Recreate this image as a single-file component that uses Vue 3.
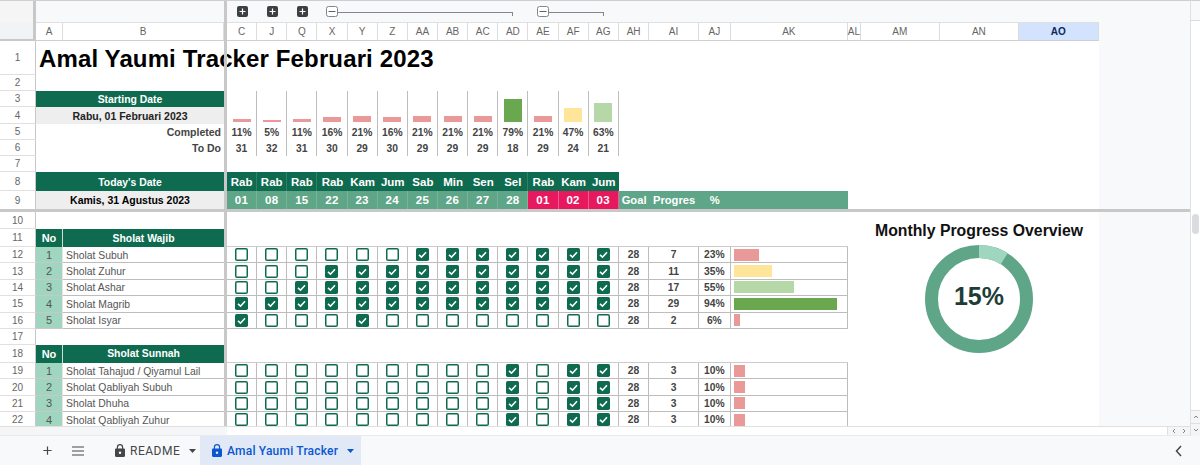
<script setup>
const cols = ['C','J','Q','X','Y','Z','AA','AB','AC','AD','AE','AF','AG']
const restCols = [['AH',''],['AI',''],['AJ',''],['AK',''],['AL','narrow'],['AM',''],['AN',''],['AO','sel']]
const pct = [11,5,11,16,21,16,21,21,21,79,21,47,63]
const todo = [31,32,31,30,29,30,29,29,29,18,29,24,21]
const days = ['Rab','Rab','Rab','Rab','Kam','Jum','Sab','Min','Sen','Sel','Rab','Kam','Jum']
const dates = ['01','08','15','22','23','24','25','26','27','28','01','02','03']
const colorFor = p => (p < 30 ? '#ea9999' : p < 50 ? '#ffe599' : p < 75 ? '#b6d7a8' : '#6aa84f')
const sunnahChecks = [0,0,0,0,0,0,0,0,0,1,0,1,1]
const wajib = [
  { row: 12, no: 1, name: 'Sholat Subuh', checks: [0,0,0,0,0,0,1,1,1,1,1,1,1], prog: 7, pct: 23 },
  { row: 13, no: 2, name: 'Sholat Zuhur', checks: [0,0,0,1,1,1,1,1,1,1,1,1,1], prog: 11, pct: 35 },
  { row: 14, no: 3, name: 'Sholat Ashar', checks: [0,0,1,1,1,1,1,1,1,1,1,1,1], prog: 17, pct: 55 },
  { row: 15, no: 4, name: 'Sholat Magrib', checks: [1,1,1,1,1,1,1,1,1,1,1,1,1], prog: 29, pct: 94 },
  { row: 16, no: 5, name: 'Sholat Isyar', checks: [1,0,0,0,1,0,0,0,0,0,0,0,0], prog: 2, pct: 6 }
]
const sunnah = [
  { row: 19, no: 1, name: 'Sholat Tahajud / Qiyamul Lail', checks: sunnahChecks, prog: 3, pct: 10 },
  { row: 20, no: 2, name: 'Sholat Qabliyah Subuh', checks: sunnahChecks, prog: 3, pct: 10 },
  { row: 21, no: 3, name: 'Sholat Dhuha', checks: sunnahChecks, prog: 3, pct: 10 },
  { row: 22, no: 4, name: 'Sholat Qabliyah Zuhur', checks: sunnahChecks, prog: 3, pct: 10 }
]
const sections = [
  { headRow: 11, blankRow: 10, title: 'Sholat Wajib', rows: wajib },
  { headRow: 18, blankRow: 17, title: 'Sholat Sunnah', rows: sunnah }
]
const circumference = 2 * Math.PI * 47.5
const donutDash = `${circumference * 32 / 360} ${circumference}`
</script>

<template>
  <div class="app">
    <div class="upper">
      <div class="content">
        <div class="viewport">
          <div class="grid top-grid">
            <!-- group row -->
            <div class="corner-a"></div>
            <div class="ab groupbg"></div>
            <div class="fz"></div>
            <div v-for="n in 3" :key="'p' + n" class="groupbg gcell">
              <svg class="plus" viewBox="0 0 11 11"><rect width="11" height="11" rx="2" fill="#3c4043"/><path d="M5.5 2.5v6M2.5 5.5h6" stroke="#fff" stroke-width="1.2"/></svg>
            </div>
            <div class="groupbg bracket span7">
              <svg class="minus" viewBox="0 0 12 11"><rect x=".5" y=".5" width="11" height="10" rx="2" fill="#fff" stroke="#80868b"/><path d="M2.5 5.5h7" stroke="#5f6368"/></svg>
              <span class="bline"></span>
            </div>
            <div class="groupbg bracket span3">
              <svg class="minus" viewBox="0 0 12 11"><rect x=".5" y=".5" width="11" height="10" rx="2" fill="#fff" stroke="#80868b"/><path d="M2.5 5.5h7" stroke="#5f6368"/></svg>
              <span class="bline"></span>
            </div>
            <div class="groupbg span8"></div>

            <!-- column letters -->
            <div class="corner-b"></div>
            <div class="colh">A</div>
            <div class="colh">B</div>
            <div class="fz"></div>
            <div v-for="c in cols" :key="c" class="colh">{{ c }}</div>
            <div v-for="c in restCols" :key="c[0]" class="colh" :class="c[1]">{{ c[0] }}</div>

            <!-- row 1 -->
            <div class="rown">1</div>
            <div class="ab title">Amal Yaumi Tracker Februari 2023</div>
            <div class="fz"></div>
            <div class="span21"></div>

            <!-- row 2 -->
            <div class="rown">2</div>
            <div class="ab"></div>
            <div class="fz"></div>
            <div class="span21"></div>

            <!-- rows 3 and 4 -->
            <div class="rown">3</div>
            <div class="ab green hcell">Starting Date</div>
            <div class="fz rows2"></div>
            <div v-for="(p, i) in pct" :key="'b' + i" class="barcell rows2">
              <span class="vbar-mini" :style="{ height: p * 0.29 + 0.3 + 'px', background: colorFor(p) }"></span>
            </div>
            <div class="span8 rows2"></div>
            <div class="rown">4</div>
            <div class="ab greycell">Rabu, 01 Februari 2023</div>

            <!-- row 5 -->
            <div class="rown">5</div>
            <div class="ab label">Completed</div>
            <div class="fz"></div>
            <div v-for="(p, i) in pct" :key="'c' + i" class="stat">{{ p }}%</div>
            <div class="span8"></div>

            <!-- row 6 -->
            <div class="rown">6</div>
            <div class="ab label">To Do</div>
            <div class="fz"></div>
            <div v-for="(t, i) in todo" :key="'t' + i" class="stat">{{ t }}</div>
            <div class="span8"></div>

            <!-- row 7 -->
            <div class="rown">7</div>
            <div class="ab"></div>
            <div class="fz"></div>
            <div class="span21"></div>

            <!-- row 8 -->
            <div class="rown">8</div>
            <div class="ab green hcell">Today's Date</div>
            <div class="fz"></div>
            <div v-for="(d, i) in days" :key="'d' + i" class="day" :class="{ sep: i < 3 || i === 9 }">{{ d }}</div>
            <div class="span8"></div>

            <!-- row 9 -->
            <div class="rown last">9</div>
            <div class="ab greycell strong">Kamis, 31 Agustus 2023</div>
            <div class="fz"></div>
            <div v-for="(d, i) in dates" :key="'n' + i" class="date" :class="{ pink: i > 9 }">{{ d }}</div>
            <div class="mid meta">Goal</div>
            <div class="mid meta">Progres</div>
            <div class="mid meta">%</div>
            <div class="mid"></div>
            <div class="span4"></div>
          </div>

          <div class="hfreeze"></div>

          <div class="bottom">
            <div class="grid bottom-grid">
              <template v-for="s in sections" :key="s.title">
                <div class="rown">{{ s.blankRow }}</div>
                <div class="ab"></div>
                <div class="fz"></div>
                <div class="span21"></div>

                <div class="rown">{{ s.headRow }}</div>
                <div class="green no-head">No</div>
                <div class="green sect">{{ s.title }}</div>
                <div class="fz"></div>
                <div class="span17 headfill"></div>
                <div class="span4"></div>

                <template v-for="r in s.rows" :key="r.row">
                  <div class="rown">{{ r.row }}</div>
                  <div class="no">{{ r.no }}</div>
                  <div class="name">{{ r.name }}</div>
                  <div class="fz"></div>
                  <div v-for="(c, i) in r.checks" :key="i" class="chk">
                    <svg v-if="c" class="box" viewBox="0 0 13 13"><rect width="13" height="13" rx="1.8" fill="#0f6b4f"/><path d="M3 6.8l2.5 2.4L10 4.2" fill="none" stroke="#fff" stroke-width="1.6"/></svg>
                    <svg v-else class="box" viewBox="0 0 13 13"><rect x=".75" y=".75" width="11.5" height="11.5" rx="1.3" fill="#fff" stroke="#0f6b4f" stroke-width="1.5"/></svg>
                  </div>
                  <div class="val">28</div>
                  <div class="val">{{ r.prog }}</div>
                  <div class="val">{{ r.pct }}%</div>
                  <div class="barwrap"><span class="hbar-mini" :style="{ width: r.pct * 1.1 + 'px', background: colorFor(r.pct) }"></span></div>
                  <div class="span4"></div>
                </template>
              </template>
            </div>

            <div class="chart">
              <div class="chart-title">Monthly Progress Overview</div>
              <svg class="donut" viewBox="0 0 108 108">
                <circle cx="54" cy="54" r="47.5" fill="none" stroke="#5fa688" stroke-width="13"/>
                <circle cx="54" cy="54" r="47.5" fill="none" stroke="#9ed6bf" stroke-width="13" :stroke-dasharray="donutDash" transform="rotate(-90 54 54)"/>
                <text x="54" y="60" text-anchor="middle" class="donut-text">15%</text>
              </svg>
            </div>
          </div>
        </div>

        <div class="hscroll">
          <div class="hs-left"></div>
          <div class="hs-thumb"></div>
          <div class="hs-track"></div>
          <div class="hs-btns">
            <svg viewBox="0 0 6 6"><path d="M4 1L2 3l2 2" fill="none" stroke="#80868b"/></svg>
            <svg viewBox="0 0 6 6"><path d="M2 1l2 2-2 2" fill="none" stroke="#80868b"/></svg>
          </div>
        </div>
      </div>

      <div class="vscroll">
        <div class="vs-top"></div>
        <div class="vs-thumb"></div>
        <div class="vs-track"></div>
        <div class="vs-btn"><svg viewBox="0 0 6 6"><path d="M1 4l2-2 2 2" fill="none" stroke="#80868b"/></svg></div>
        <div class="vs-btn"><svg viewBox="0 0 6 6"><path d="M1 2l2 2 2-2" fill="none" stroke="#80868b"/></svg></div>
      </div>
    </div>

    <div class="tabs">
      <svg class="ic add" viewBox="0 0 12 12"><path d="M6 1.5v9M1.5 6h9" stroke="#444746" stroke-width="1.3"/></svg>
      <svg class="ic menu" viewBox="0 0 12 10"><path d="M0 1h12M0 5h12M0 9h12" stroke="#444746" stroke-width="1.2"/></svg>
      <div class="tab">
        <svg class="lock" viewBox="0 0 10 13"><path fill="#444746" d="M8.8 4.4h-.6V3.2a3.2 3.2 0 0 0-6.4 0v1.2h-.6C.5 4.4 0 4.9 0 5.6v6.2c0 .7.5 1.2 1.2 1.2h7.6c.7 0 1.2-.5 1.2-1.2V5.6c0-.7-.5-1.2-1.2-1.2zM5 10a1.2 1.2 0 1 1 0-2.5A1.2 1.2 0 0 1 5 10zm2-5.6H3V3.2a2 2 0 0 1 4 0z"/></svg>
        <span class="tab-name">README</span>
        <svg class="caret" viewBox="0 0 7 4"><path d="M0 0h7L3.5 4z" fill="#444746"/></svg>
      </div>
      <div class="tab active">
        <svg class="lock" viewBox="0 0 10 13"><path fill="#0b57d0" d="M8.8 4.4h-.6V3.2a3.2 3.2 0 0 0-6.4 0v1.2h-.6C.5 4.4 0 4.9 0 5.6v6.2c0 .7.5 1.2 1.2 1.2h7.6c.7 0 1.2-.5 1.2-1.2V5.6c0-.7-.5-1.2-1.2-1.2zM5 10a1.2 1.2 0 1 1 0-2.5A1.2 1.2 0 0 1 5 10zm2-5.6H3V3.2a2 2 0 0 1 4 0z"/></svg>
        <span class="tab-name">Amal Yaumi Tracker</span>
        <svg class="caret" viewBox="0 0 7 4"><path d="M0 0h7L3.5 4z" fill="#0b57d0"/></svg>
      </div>
      <svg class="chev" viewBox="0 0 7 12"><path d="M6 1L1.5 6 6 11" fill="none" stroke="#444746" stroke-width="1.5"/></svg>
    </div>
  </div>
</template>

<style>
html, body { margin: 0; padding: 0; background: #fff; overflow: hidden; }
</style>

<style scoped>
.app {
  width: 1200px; height: 465px; display: flex; flex-direction: column; overflow: hidden;
  font-family: "Liberation Sans", Arial, sans-serif; background: #f8f9fa; color: #333;
}
.upper { display: flex; height: 436px; }
.content { width: 1190px; display: flex; flex-direction: column; border-top: 1px solid #cfcfcf; box-sizing: border-box; }
.viewport { height: 425px; overflow: hidden; }
.grid {
  display: grid; width: 1098.7px; background: #fff;
  grid-template-columns: 36px 27px 161px 3px repeat(13, 30.154px) 30.5px 49.5px 32px 117px 13px 79px 79px 79.7px;
}
.top-grid { grid-template-rows: 22px 18px 34px 16px 16px 17px 16px 16px 16px 19px 18px; }
.bottom-grid { grid-template-rows: 17px 18px repeat(5, 16.4px) 16px 18px repeat(4, 16.4px); }
.bottom { position: relative; }
.grid > div { min-width: 0; box-sizing: border-box; }

.ab { grid-column: span 2; }
.span3 { grid-column: span 3; }
.span4 { grid-column: span 4; }
.span7 { grid-column: span 7; }
.span8 { grid-column: span 8; }
.span17 { grid-column: span 17; }
.span21 { grid-column: span 21; }
.rows2 { grid-row: span 2; }
.headfill { border-bottom: 1px solid #cccccc; }

.fz { background: #c8c8c8; }
.hfreeze { height: 3px; background: #c8c8c8; }

.corner-a { background: #f5f5f5; border-right: 3px solid #c8c8c8; }
.corner-b { background: #f1f3f4; border-right: 3px solid #c8c8c8; border-bottom: 2px solid #c8c8c8; }
.groupbg { background: #f8f9fa; border-bottom: 1px solid #e0e0e0; }
.gcell { display: flex; align-items: center; justify-content: center; }
.plus { width: 11px; height: 11px; }
.bracket { display: flex; align-items: center; padding: 0 15px 0 9px; }
.minus { width: 12px; height: 11px; flex: none; }
.bline { flex: 1; height: 4px; margin-top: 4px; border-top: 1px solid #80868b; border-right: 1px solid #80868b; box-sizing: border-box; }

.colh {
  display: flex; align-items: center; justify-content: center; font-size: 10px; color: #666;
  border-right: 1px solid #dadce0; border-bottom: 1px solid #cfcfcf;
}
.colh.sel { background: #d3e3fd; color: #0b2a5a; font-weight: 700; }
.rown {
  display: flex; align-items: center; justify-content: center; font-size: 10px; color: #666;
  border-right: 1px solid #c8c8c8; border-bottom: 1px solid #e0e0e0;
}
.rown.last { border-bottom: 0; }

.title { font-size: 24px; font-weight: 700; color: #000; white-space: nowrap; padding-left: 3px; line-height: 36px; height: 34px; letter-spacing: .13px; }
.green { background: #0f6b4f; color: #fff; font-weight: 700; display: flex; align-items: center; justify-content: center; }
.hcell { font-size: 10.4px; padding-top: 1px; }
.greycell {
  background: #eeeeee; color: #222; font-size: 10.5px; font-weight: 700;
  display: flex; align-items: center; justify-content: center;
}
.greycell.strong { color: #000; }
.label { display: flex; align-items: center; justify-content: flex-end; padding-right: 3px; font-size: 10.5px; font-weight: 700; color: #444; }
.barcell { display: flex; align-items: flex-end; justify-content: center; padding-bottom: 2px; border-right: 1px solid #bdbdbd; }
.vbar-mini { width: 18px; display: block; }
.stat { display: flex; align-items: center; justify-content: center; font-size: 10.3px; font-weight: 700; color: #444; border-right: 1px solid #bdbdbd; }

.day {
  background: #0f6b4f; color: #fff; font-size: 11.5px; font-weight: 700;
  display: flex; align-items: center; justify-content: center; white-space: nowrap;
}
.day.sep { border-right: 1px solid #2f8267; }
.date {
  background: #5fa688; color: #fff; font-size: 11.5px; font-weight: 700; letter-spacing: .3px;
  display: flex; align-items: center; justify-content: center; border-right: 1px solid #78b49a;
}
.date.pink { background: #e8185f; border-right-color: #f0608f; }
.mid { background: #5fa688; color: #fff; font-size: 11.2px; font-weight: 700; display: flex; align-items: center; justify-content: center; white-space: nowrap; }

.no-head { font-size: 11px; border-right: 1px solid #c8e0d6; }
.sect { font-size: 10.4px; }
.no {
  background: #a0d6bf; color: #555; font-size: 11px; display: flex; align-items: center; justify-content: center;
  border-bottom: 1px solid #c8c8c8; border-right: 1px solid #e5e5e5;
}
.name {
  font-size: 10.4px; color: #555; display: flex; align-items: center; padding: 1px 0 0 3px; white-space: nowrap;
  border-bottom: 1px solid #bdbdbd;
}
.chk { display: flex; align-items: center; justify-content: center; border-right: 1px solid #bdbdbd; border-bottom: 1px solid #bdbdbd; }
.box { width: 13px; height: 13px; display: block; }
.val {
  display: flex; align-items: center; justify-content: center; font-size: 10.3px; font-weight: 700; color: #444;
  border-right: 1px solid #bdbdbd; border-bottom: 1px solid #bdbdbd;
}
.barwrap { display: flex; align-items: center; padding-left: 3px; border-right: 1px solid #bdbdbd; border-bottom: 1px solid #bdbdbd; }
.hbar-mini { display: block; height: 12px; }

.chart {
  position: absolute; left: 869px; top: 8px; width: 220px;
  display: flex; flex-direction: column; align-items: center; gap: 4px;
}
.chart-title { font-size: 15.8px; font-weight: 700; color: #111; line-height: 21px; white-space: nowrap; }
.donut { width: 108px; height: 108px; display: block; }
.donut-text { font-size: 25px; font-weight: 700; fill: #1f3d38; font-family: "Liberation Sans", Arial, sans-serif; }

.hscroll { height: 10px; display: flex; border-top: 1px solid #e0e0e0; border-bottom: 1px solid #e8eaed; box-sizing: border-box; background: #fff; }
.hs-left { width: 36px; background: #f5f5f5; }
.hs-thumb { width: 191px; background: #f5f6f7; }
.hs-track { flex: 1; }
.hs-btns { width: 23px; display: flex; align-items: center; justify-content: space-between; padding: 0 3px; box-sizing: border-box; background: #f5f5f5; border-left: 1px solid #e0e0e0; }
.hs-btns svg { width: 6px; height: 6px; }

.vscroll { width: 10px; display: flex; flex-direction: column; background: #fff; border-left: 1px solid #e0e0e0; box-sizing: border-box; border-top: 1px solid #cfcfcf; }
.vs-top { height: 19px; background: #f8f9fa; border-bottom: 1px solid #dadce0; }
.vs-thumb { height: 20px; margin: 193px 1px 0 1px; background: #dadce0; border-radius: 4px; }
.vs-track { flex: 1; }
.vs-btn { height: 12px; display: flex; align-items: center; justify-content: center; background: #f5f5f5; border-top: 1px solid #e0e0e0; }
.vs-btn svg { width: 6px; height: 6px; }

.tabs { height: 29px; display: flex; align-items: center; background: #f8f9fa; font-family: Roboto, "Liberation Sans", sans-serif; }
.ic { display: block; flex: none; }
.add { width: 11px; height: 11px; margin-left: 42px; }
.menu { width: 12px; height: 10px; margin-left: 19px; }
.tab { height: 100%; display: flex; align-items: center; box-sizing: border-box; color: #444746; font-size: 12px; font-weight: 400; letter-spacing: .5px; white-space: nowrap; }
.tab:not(.active) { width: 96px; padding-left: 11px; margin-left: 20px; }
.tab.active { width: 161px; padding-left: 12px; background: #e1e9f7; color: #0b57d0; font-weight: 500; letter-spacing: .2px; }
.lock { width: 10px; height: 13px; flex: none; margin-right: 5px; }
.caret { width: 7px; height: 4px; margin-left: 9px; flex: none; }
.chev { width: 7px; height: 12px; margin-left: auto; margin-right: 18px; flex: none; }
</style>
